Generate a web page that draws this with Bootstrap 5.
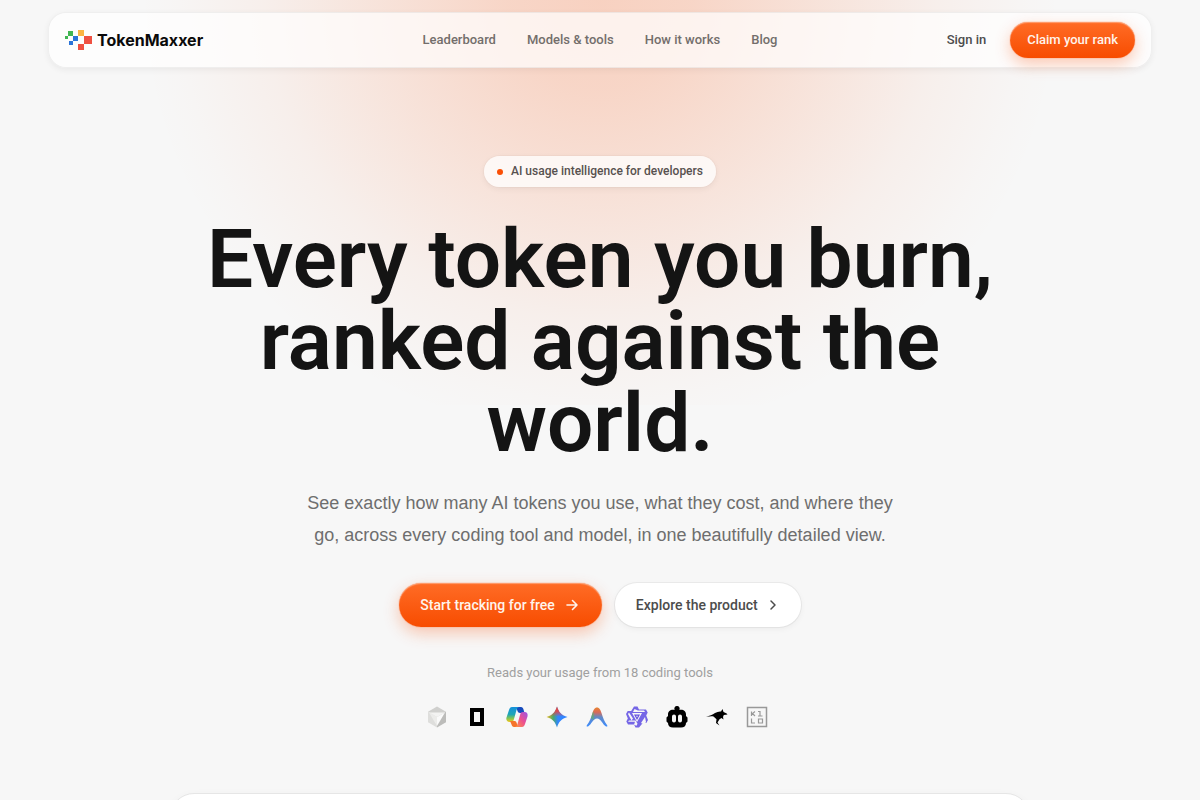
<!DOCTYPE html>
<html lang="en">
<head>
<meta charset="utf-8">
<meta name="viewport" content="width=device-width, initial-scale=1">
<title>TokenMaxxer</title>
<link href="https://cdn.jsdelivr.net/npm/bootstrap@5.3.0/dist/css/bootstrap.min.css" rel="stylesheet">
<style>
  :root { --ink: #141414; --brand: #fa4f05; }
  body { background: #f7f7f7; color: var(--ink); font-family: Roboto, "Liberation Sans", sans-serif; }
  .page-glow { top: 0; left: 0; right: 0; height: 405px; z-index: -1;
    background: radial-gradient(ellipse 460px 440px at 50% 0, rgba(250,89,20,.24) 0%, rgba(250,89,20,.21) 20%, rgba(250,89,20,.135) 46%, rgba(250,89,20,.05) 73%, rgba(250,89,20,.01) 92%, transparent 100%); }
  .site-header { padding: 12px 48px 0; }
  .site-bar { min-height: 56px; padding: 0 16px; border-radius: 18px; background: rgba(255,255,255,.7); border: 1px solid rgba(20,20,20,.06); box-shadow: 0 2px 6px rgba(20,20,20,.06); }
  .bar-side { flex: 1 1 0; }
  .brand-name { font: 700 16px/24px Inter, sans-serif; color: #0a0a0a; }
  .bar-links { gap: 31px; font-size: 13px; font-weight: 500; }
  .bar-links a { color: #736e6b; }
  .sign-link { font-size: 13px; font-weight: 500; color: #4c4c4c; }
  .pill { border-radius: 999px; font-weight: 500; border: 0; }
  .pill-brand, .pill-brand:hover { color: #fff4ec; background: linear-gradient(#ff6c26, #f74c00);
    box-shadow: inset 0 1px 1px rgba(255,255,255,.35), 0 0 1px var(--brand), 0 6px 16px rgba(250,79,5,.3); }
  .pill-plain, .pill-plain:hover { color: #4c4c4c; background: #fff; box-shadow: 0 0 0 1px rgba(20,20,20,.05), 0 2px 6px rgba(20,20,20,.05); }
  .pill-small { font-size: 13px; line-height: 20px; padding: 8px 17px; }
  .pill-large { font-size: 14px; line-height: 20px; padding: 12px 21px; }
  .hero-main { padding-top: 88px; }
  .tagline { gap: 8px; padding: 6px 13px; font-size: 12px; line-height: 19px; font-weight: 500; color: #57514f; background: rgba(255,255,255,.75); box-shadow: 0 0 0 1px rgba(20,20,20,.02), 0 2px 6px rgba(20,20,20,.06); }
  .tagline-dot { width: 6px; height: 6px; background: var(--brand); }
  .hero-title { max-width: 880px; margin: 31px auto 0; font-size: 82px; line-height: 82px; font-weight: 600; }
  .hero-text { max-width: 600px; margin: 23px auto 0; font: 400 18px/32px "Liberation Sans", sans-serif; color: #6e6e6e; }
  .hero-actions { gap: 13px; margin-top: 32px; }
  .tools-note { font-size: 13px; line-height: 20px; color: #a0a0a0; margin: 36px 0 0; }
  .tools-row { gap: 16px; margin: 22px 6px 0 0; }
  /* The preview peeks in at the foot of the first screen. */
  .preview-peek { height: 0; margin-top: 60px; padding-top: 4px; }
  .preview-card { max-width: 860px; height: 320px; margin: 0 auto; background: #fff; border: 1px solid #e6e6e6; border-radius: 24px; box-shadow: 0 2px 8px rgba(20,20,20,.04); }
</style>
</head>
<body class="position-relative d-flex flex-column min-vh-100">
<div class="page-glow position-absolute" aria-hidden="true"></div>

<header class="site-header sticky-top">
  <nav class="site-bar d-flex align-items-center" aria-label="Main">
    <div class="bar-side d-flex">
      <a href="#" class="d-flex align-items-center gap-1 text-decoration-none">
        <svg width="28" height="22" viewBox="0 0 28 22" aria-hidden="true">
          <path fill="#41b653" d="M0 7h3v3H0zM3 2h5v5H3z"/>
          <path fill="#2b74d8" d="M8 7h5v5H8zM4 12h4v4H4z"/>
          <path fill="#fbb544" d="M13 1h6v6h-6z"/>
          <path fill="#ef5142" d="M19 7h8v8h-8zM13 15h6v6h-6z"/>
        </svg>
        <span class="brand-name">TokenMaxxer</span>
      </a>
    </div>
    <div class="bar-links d-flex">
      <a class="text-decoration-none" href="#">Leaderboard</a>
      <a class="text-decoration-none" href="#">Models &amp; tools</a>
      <a class="text-decoration-none" href="#">How it works</a>
      <a class="text-decoration-none" href="#">Blog</a>
    </div>
    <div class="bar-side d-flex align-items-center justify-content-end gap-4">
      <a class="sign-link text-decoration-none" href="#">Sign in</a>
      <button type="button" class="btn pill pill-brand pill-small">Claim your rank</button>
    </div>
  </nav>
</header>

<main class="hero-main text-center px-3 flex-grow-1 d-flex flex-column">
  <div class="tagline pill d-flex align-items-center align-self-center">
    <span class="tagline-dot rounded-circle"></span>AI usage intelligence for developers
  </div>
  <h1 class="hero-title">Every token you burn, ranked against the world.</h1>
  <p class="hero-text">See exactly how many AI tokens you use, what they cost, and where they go, across every coding tool and model, in one beautifully detailed view.</p>
  <div class="hero-actions d-flex flex-wrap justify-content-center">
    <button type="button" class="btn pill pill-brand pill-large d-flex align-items-center">Start tracking for free
      <svg class="ms-2" width="18" height="18" viewBox="0 0 18 18" fill="none" stroke="currentColor" stroke-width="1.6" stroke-linecap="round" stroke-linejoin="round" aria-hidden="true"><path d="M4 9h10M9.500 4.500L14 9l-4.500 4.500"/></svg>
    </button>
    <button type="button" class="btn pill pill-plain pill-large d-flex align-items-center">Explore the product
      <svg class="ms-2" width="14" height="14" viewBox="0 0 14 14" fill="none" stroke="currentColor" stroke-width="1.500" stroke-linecap="round" stroke-linejoin="round" aria-hidden="true"><path d="M5 3l4 4-4 4"/></svg>
    </button>
  </div>
  <p class="tools-note">Reads your usage from 18 coding tools</p>
  <div class="tools-row d-flex justify-content-center">
    <svg width="24" height="24" viewBox="0 0 24 24" role="img" aria-label="Cursor">
      <path fill="#d0d0ce" d="M12 1.500l9 5.200-9 5.300-9-5.300z"/><path fill="#dededc" d="M3 6.700L12 12v10.500l-9-5.200z"/><path fill="#bcbcba" d="M21 6.700v10.600l-9 5.200V12z"/><path fill="#f3f3f2" d="M4 7.500h16L12 12z"/><path fill="#ececea" d="M4 7.500L12 12v9z"/><path fill="#fafafa" d="M20 7.500L12 12v9z"/>
    </svg>
    <svg width="24" height="24" viewBox="0 0 24 24" role="img" aria-label="OpenCode"><path fill-rule="evenodd" d="M5 3h14v18H5zM9 7v10h6V7z"/></svg>
    <svg width="24" height="24" viewBox="0 0 24 24" role="img" aria-label="GitHub Copilot">
      <defs>
        <linearGradient id="cpA" x1="0" y1="0" x2="0" y2="1"><stop stop-color="#1591dc"/><stop offset=".5" stop-color="#1fa6b5"/><stop offset=".75" stop-color="#7fc454"/><stop offset="1" stop-color="#f4c61d"/></linearGradient>
        <linearGradient id="cpB" x1="1" y1="0" x2="0" y2="1"><stop stop-color="#9a55e8"/><stop offset=".5" stop-color="#ed4f8f"/><stop offset="1" stop-color="#ff9a3c"/></linearGradient>
      </defs>
      <path fill="#174bbd" d="M11 2h5c1.500 0 2 1 2.500 2.500L19.500 8H15c-1.500 0-2-.7-2.500-2z"/>
      <path fill="url(#cpA)" d="M7 2h7c-1.500.3-2 1.500-2.500 3L9 14c-.5 1.800-1 3-3 3H4.500C2 17 .8 15 1.500 12.500L4 5c.6-2 1.500-3 3-3z"/>
      <path fill="#f5742b" d="M5 16h4.500c1.500 0 1.700.7 2.200 2 .4 1.500 1 4 3 4H9c-1.500 0-2-1-2.500-2.500z"/>
      <path fill="url(#cpB)" d="M18 7h1.500c2.500 0 3.700 2 3 4.500L20 19c-.6 2-1.500 3-3 3h-7c1.500-.3 2-1.500 2.500-3L15 10c.5-1.800 1-3 3-3z"/>
    </svg>
    <svg width="24" height="24" viewBox="0 0 24 24" role="img" aria-label="Gemini">
      <defs>
        <linearGradient id="gmA" x1="0" y1="0" x2="1" y2="0"><stop stop-color="#f4b91d"/><stop offset=".32" stop-color="#48a86b"/><stop offset=".55" stop-color="#3186ff"/><stop offset="1" stop-color="#3186ff"/></linearGradient>
        <linearGradient id="gmB" x1="0" y1="0" x2="0" y2="1"><stop stop-color="#ef4338"/><stop offset=".22" stop-color="#d9484d"/><stop offset=".48" stop-color="#ef4338" stop-opacity="0"/></linearGradient>
      </defs>
      <path fill="url(#gmA)" d="M12 1.500c1.700 5.800 4.700 8.800 10.500 10.500-5.800 1.700-8.800 4.700-10.500 10.500C10.300 16.700 7.300 13.700 1.500 12 7.300 10.300 10.300 7.300 12 1.500z"/>
      <path fill="url(#gmB)" d="M12 1.500c1.700 5.800 4.700 8.800 10.500 10.500-5.800 1.700-8.800 4.700-10.500 10.500C10.300 16.700 7.300 13.700 1.500 12 7.300 10.300 10.300 7.300 12 1.500z"/>
    </svg>
    <svg width="24" height="24" viewBox="0 0 24 24" role="img" aria-label="Antigravity">
      <defs><linearGradient id="agA" x1="0" y1="0" x2="0" y2="1"><stop stop-color="#e88432"/><stop offset=".25" stop-color="#d86a58"/><stop offset=".5" stop-color="#6389c6"/><stop offset="1" stop-color="#3b8cff"/></linearGradient>
      <linearGradient id="agB" x1="0" y1="0" x2="1" y2="0"><stop offset=".25" stop-color="#5bb56a"/><stop offset=".55" stop-color="#5bb56a" stop-opacity="0"/></linearGradient></defs>
      <path fill="url(#agA)" d="M12 2.500c2.500 0 3.600 2.500 4.500 5.500 1.500 5 3 9 5.500 12 1 1.200 0 2-1 1.400-3.500-2-5-8-9-8s-5.500 6-9 8c-1 .6-2-.2-1-1.400 2.500-3 4-7 5.500-12 .9-3 2-5.500 4.500-5.500z"/>
      <path fill="url(#agB)" opacity=".7" d="M8 6.500L6 13l3 2 4-4z"/>
    </svg>
    <svg width="24" height="24" viewBox="0 0 24 24" role="img" aria-label="Qwen">
      <path fill="#7566e6" d="M9 1.500h3.500L14 4.500h7l1.700 3-1.500 3L23 15l-1.700 3h-3.500L14 22.500h-3.500L9 19.500H3l-1.700-3 1.500-3L1 9l1.700-3h3.500z"/>
      <path fill="#f7f7f7" d="M9.500 4L8 7H20l-1-1.500h-6zM4 7.500L3 9l3.500 6.500 1.500-2zM20 12l-4 6 1 .500h3l1-1.500zM4 15.500l-1 1.200h7l-1 3 2.500 1 1-2-2-3.200z"/>
      <path fill="#f7f7f7" d="M7 8h10l-5 9z"/><path fill="#6553dd" d="M9 9.500h6L12 15z"/><path fill="#e9e6fb" d="M11 10.700h2L12 12.500z"/>
    </svg>
    <svg width="24" height="24" viewBox="0 0 24 24" role="img" aria-label="Roo Code">
      <path fill-rule="evenodd" d="M12 1a2.500 2.500 0 0 1 2.300 3.800H16c3 0 5 2 5 4.700V11l1.500 1.500v4L21 18c0 3-2 4.500-5 4.500H8c-3 0-5-1.500-5-4.500l-1.500-1.500v-4L3 11V9.500c0-2.700 2-4.700 5-4.700h1.700A2.500 2.500 0 0 1 12 1zM7 11.500v4a2 2 0 0 0 4 0v-4a2 2 0 0 0-4 0zm6 0v4a2 2 0 0 0 4 0v-4a2 2 0 0 0-4 0z"/>
    </svg>
    <svg width="24" height="24" viewBox="0 0 24 24" role="img" aria-label="Kangaroo">
      <path d="M1 11.500c3.500-.3 6.500-2 9-3.500 2-1.200 4-1.700 6-1.500l1.500-2.500 1 3c1.500.5 3 1 4 2.500l-3.700.5-.8 2 .5 2.500-2-1.500-2 1.200-2 3.300 2 3-3.500-2.500.5-3.800-3-2.700c-2.500-.6-4.500.2-7.500 0z"/>
    </svg>
    <svg width="24" height="24" viewBox="0 0 24 24" role="img" aria-label="Kilo Code" fill="none" stroke="#999">
      <path d="M2.500 2.500h19v19h-19z" stroke-width="1.500"/><path d="M6.500 6.500v4.500M10 6.500L7.500 8.500 10 11M13 6.500h2V11M13 11h4.500M6.500 13.500V18H10M13.500 14h4v4h-4z" stroke-width="1.200"/>
    </svg>
  </div>
  <div class="preview-peek flex-grow-1 overflow-hidden">
    <section class="preview-card" aria-label="Product preview"></section>
  </div>
</main>
<script src="https://cdn.jsdelivr.net/npm/bootstrap@5.3.0/dist/js/bootstrap.bundle.min.js"></script>
</body>
</html>
